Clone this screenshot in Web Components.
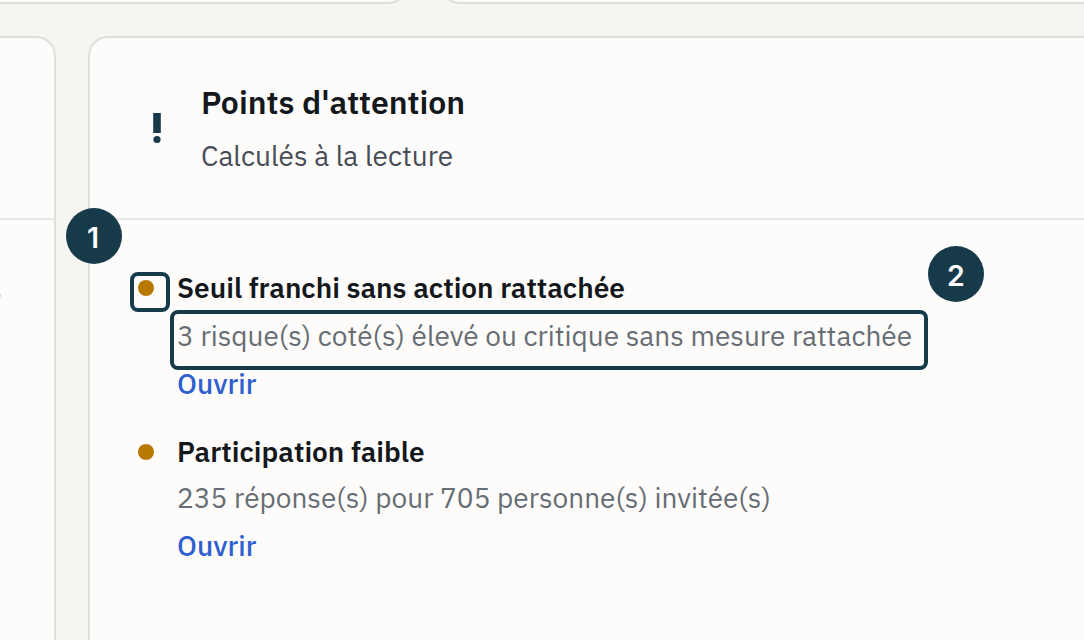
<!DOCTYPE html>
<html lang="fr">
<head>
<meta charset="utf-8">
<title>Points d'attention</title>
<style>
html, body { margin: 0; height: 100%; }
body {
  width: 1084px;
  height: 640px;
  overflow: hidden;
  position: relative;
  background: #f6f5f2;
  font-family: "IBM Plex Sans", Roboto, "Noto Sans", sans-serif;
  --line: #e0dfdc;
  --line-soft: #e7e6e4;
  --card: #fdfcfa;
  --navy: #173a4a;
}
</style>
</head>
<body>
<dash-board>
  <dash-row>
    <dash-card edge="left" style="width:408px"></dash-card>
    <dash-card edge="right" style="flex:1"></dash-card>
  </dash-row>
  <dash-row main>
    <dash-card edge="left" style="width:56px">
      <card-head slot="head"></card-head>
      <cut-mark></cut-mark>
    </dash-card>
    <dash-card edge="right" style="flex:1">
      <card-head slot="head" icon>
        <span slot="title">Points d'attention</span>
        <span slot="sub">Calculés à la lecture</span>
      </card-head>
      <alert-item>
        <span slot="title">Seuil franchi sans action rattachée</span>
        <span slot="text">3 risque(s) coté(s) élevé ou critique sans mesure rattachée</span>
      </alert-item>
      <alert-item compact>
        <span slot="title">Participation faible</span>
        <span slot="text">235 réponse(s) pour 705 personne(s) invitée(s)</span>
      </alert-item>
    </dash-card>
  </dash-row>
</dash-board>
<mark-frame style="left:130px;top:272px;width:40px;height:40px"></mark-frame>
<mark-frame style="left:170px;top:310px;width:758px;height:60px"></mark-frame>
<mark-badge style="left:66px;top:208px;padding-right:2px">1</mark-badge>
<mark-badge style="left:928px;top:246px">2</mark-badge>

<script>
class BaseElement extends HTMLElement {
    constructor() {
        super()
        this.attachShadow({ mode: 'open' })
    }
    connectedCallback() {
        this.shadowRoot.innerHTML = `<style>*{box-sizing:border-box;}${this.css()}</style>${this.html()}`
    }
    css() { return '' }
    html() { return '<slot></slot>' }
}
class DashBoard extends BaseElement {
    css() { return `:host{display:flex; flex-direction:column; gap:32px; height:640px;}` }
}
class DashRow extends BaseElement {
    // the first row only shows the bottom edge of its cards
    css() { return `
:host{display:flex; gap:32px; height:4px; align-items:flex-end; overflow:hidden;}
:host([main]){flex:1; height:auto; align-items:stretch;}
` }
}
class DashCard extends BaseElement {
    css() { return `
:host{display:block; box-sizing:border-box; min-height:60px; background:var(--card); border:2px solid var(--line);}
:host([edge=left]){border-left:0; border-radius:0 20px 20px 0;}
:host([edge=right]){border-right:0; border-radius:20px 0 0 20px;}
:host-context(dash-row[main]){border-bottom:0; border-bottom-left-radius:0; border-bottom-right-radius:0;}
.body{display:flex; flex-direction:column; gap:20px; padding-top:44px;}
` }
    html() { return `<slot name="head"></slot><div class="body"><slot></slot></div>` }
}
class CardHead extends BaseElement {
    css() { return `
:host{display:flex; align-items:center; box-sizing:border-box; height:182px; border-bottom:2px solid var(--line-soft);}
svg{display:block; width:38px; height:38px; margin:0 25px 0 48px; fill:var(--navy);}
.title{font-size:32px; line-height:44px; font-weight:600; color:#14181c; white-space:nowrap;}
.sub{font-size:28px; line-height:40px; margin-top:12px; color:#474c57; white-space:nowrap;}
.text{margin-top:-1px;}
` }
    html() {
        if (!this.hasAttribute('icon')) { return '' }
        return `
<svg viewBox="0 0 38 38"><rect x="15.2" y="4" width="7.6" height="20"/><circle cx="19" cy="30.5" r="3.6"/></svg>
<div class="text">
  <div class="title"><slot name="title"></slot></div>
  <div class="sub"><slot name="sub"></slot></div>
</div>`
    }
}
class AlertItem extends BaseElement {
    css() { return `
:host{display:flex; gap:23px; padding-left:48px; white-space:nowrap; font-size:28px;}
.dot{width:16px; height:16px; margin-top:16px; border-radius:50%; background:#b87900; flex:none;}
.title{line-height:48px; font-weight:600; color:#14181c;}
.text{line-height:48px; color:#676d74;}
.link{display:block; line-height:48px; font-weight:500; color:#2f5fd0; text-decoration:none;}
:host([compact]) .text{line-height:44px; padding-bottom:2px;}
` }
    html() { return `
<div class="dot"></div>
<div>
  <div class="title"><slot name="title"></slot></div>
  <div class="text"><slot name="text"></slot></div>
  <a class="link">Ouvrir</a>
</div>` }
}
class CutMark extends BaseElement {
    css() { return `:host{display:block; width:1px; height:3px; margin-top:30px; background:#d5d5d5;}` }
}
class MarkFrame extends BaseElement {
    css() { return `:host{position:absolute; box-sizing:border-box; border:4px solid var(--navy); border-radius:8px;}` }
}
class MarkBadge extends BaseElement {
    css() { return `
:host{position:absolute; display:flex; align-items:center; justify-content:center; width:56px; height:56px;
  box-sizing:border-box; padding-top:3px;
  border-radius:50%; background:var(--navy); color:#fff; font:600 28.5px Inter, sans-serif;}
` }
}
customElements.define('dash-board', DashBoard)
customElements.define('dash-row', DashRow)
customElements.define('dash-card', DashCard)
customElements.define('card-head', CardHead)
customElements.define('alert-item', AlertItem)
customElements.define('cut-mark', CutMark)
customElements.define('mark-frame', MarkFrame)
customElements.define('mark-badge', MarkBadge)
</script>
</body>
</html>
